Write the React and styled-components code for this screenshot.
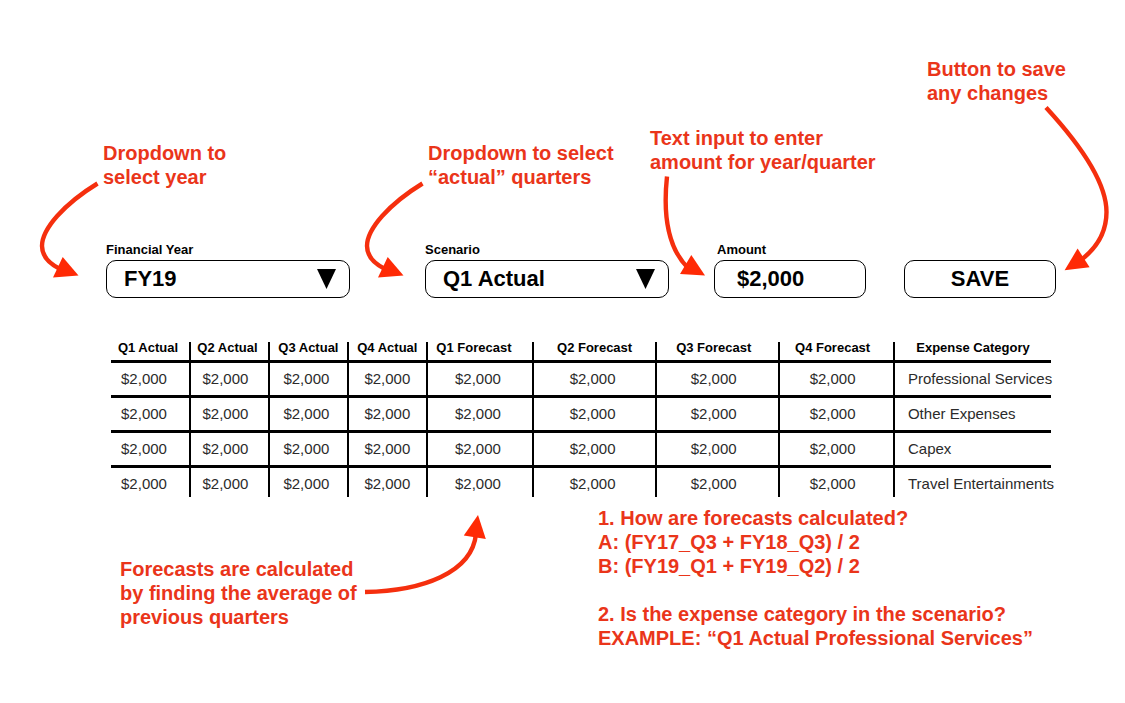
import React from 'react';
import styled, { createGlobalStyle, css } from 'styled-components';

const GlobalStyle = createGlobalStyle`
  * { box-sizing: border-box; }
  body {
    margin: 0;
    background: #fff;
    color: #000;
    font-family: "Liberation Sans", Arial, Helvetica, sans-serif;
  }
`;

const Page = styled.main`
  padding: 57px 69px 48px 106px;
`;

const Controls = styled.form`
  display: grid;
  grid-template-columns:
    minmax(0, 244fr) minmax(0, 75fr) minmax(0, 244fr) minmax(0, 45fr)
    minmax(0, 152fr) minmax(0, 38fr) minmax(0, 152fr);
  align-items: end;
`;

const Cell = styled.div`
  position: relative;
  display: flex;
  flex-direction: column;
  grid-column: ${(p) => p.$column};
`;

const Note = styled.p`
  margin: 0 0 ${(p) => p.$drop || 0}px ${(p) => p.$indent || 0}px;
  color: #ea351a;
  font-size: 20px;
  font-weight: 700;
  line-height: 24px;
  white-space: pre;
`;

const Label = styled.label`
  padding-left: ${(p) => p.$indent || 0}px;
  font-size: 13px;
  font-weight: 700;
  line-height: 16px;
  margin-bottom: 2px;
`;

const control = css`
  width: 100%;
  height: 38px;
  margin: 0;
  border: 1px solid #000;
  border-radius: 10px;
  background: #fff;
  color: #000;
  font-family: inherit;
  font-size: 22px;
  font-weight: 700;
  line-height: 24px;
`;

const SelectBox = styled.div`
  position: relative;
`;

const Select = styled.select`
  ${control}
  display: block;
  appearance: none;
  padding: 0 40px 0 17px;
`;

const Caret = styled.svg`
  position: absolute;
  right: 14px;
  top: 9px;
  pointer-events: none;
`;

const TextInput = styled.input`
  ${control}
  padding: 0 12px 0 22px;
`;

const SaveButton = styled.button`
  ${control}
  padding: 0;
  cursor: pointer;
`;

const ArrowSvg = styled.svg`
  position: absolute;
  left: ${(p) => p.$left}px;
  bottom: ${(p) => p.$bottom}px;
  pointer-events: none;
  overflow: visible;
`;

const Table = styled.table`
  width: calc(100% - 10px);
  margin: 44px 5px 0;
  border-collapse: collapse;
  table-layout: fixed;
`;

const Col = styled.col`
  width: ${(p) => p.$share}%;
`;

const Head = styled.th`
  height: 19px;
  padding: 0 ${(p) => p.$inset}px 7px 0;
  border-bottom: 3px solid #000;
  font-size: 13px;
  line-height: 11px;
  text-align: center;
  white-space: nowrap;

  & + & { border-left: 2px solid #000; }
`;

const Data = styled.td`
  height: 35px;
  padding: 8px ${(p) => p.$inset}px 0 0;
  color: #2b2b2b;
  font-size: 15px;
  line-height: 16px;
  text-align: center;
  vertical-align: top;
  white-space: nowrap;

  & + & { border-left: 2px solid #000; }
  tr + tr > & { border-top: 3px solid #000; }
  tr:last-child > & { height: 30px; }
  &:last-child { padding-left: 13px; text-align: left; }
`;

const Remarks = styled.section`
  display: grid;
  grid-template-columns: 492fr 458fr;
  align-items: start;
`;

const Remark = styled.div`
  position: relative;
  justify-self: start;
  margin: ${(p) => p.$top}px 0 0 ${(p) => p.$indent || 0}px;
`;

function Arrow({ left, bottom, box, path, head }) {
  const [, , w, h] = box;
  return (
    <ArrowSvg $left={left} $bottom={bottom} width={w} height={h} viewBox={box.join(' ')} aria-hidden="true">
      <path d={path} fill="none" stroke="#f52f0e" strokeWidth="4.4" />
      <polygon points={head} fill="#ff2a05" />
    </ArrowSvg>
  );
}

const selectArrow = {
  box: [36, 178, 64, 120],
  path: 'M97.5 183.5 C64 204 42 229 42 246 C42 256 48 263 60 269',
  head: '62.7,257 78.5,275.6 53,277.6',
};

const amountArrow = {
  box: [660, 174, 48, 124],
  path: 'M667 176.5 C663 214 667 247 688 268',
  head: '691.3,255 705,275.4 680,274',
};

const saveArrow = {
  box: [1040, 104, 72, 194],
  path: 'M1046 107.5 C1075 139 1106.5 180 1106.5 212 C1106.5 232 1098 247 1081 260',
  head: '1077.6,248.6 1064.6,270.2 1089.6,267.2',
};

const forecastArrow = {
  box: [360, 512, 128, 117],
  path: 'M365 592 C422 591 472 573 476 534',
  head: '478,515 485.8,539 463.8,535.6',
};

const columns = [
  { title: 'Q1 Actual', share: 8.4, head: 4, body: 12 },
  { title: 'Q2 Actual', share: 8.4, head: 4, body: 8 },
  { title: 'Q3 Actual', share: 8.4, head: 0, body: 4 },
  { title: 'Q4 Actual', share: 8.4, head: 0, body: 0 },
  { title: 'Q1 Forecast', share: 11.3, head: 12, body: 4 },
  { title: 'Q2 Forecast', share: 13.1, head: 0, body: 4 },
  { title: 'Q3 Forecast', share: 13.1, head: 8, body: 8 },
  { title: 'Q4 Forecast', share: 12.2, head: 8, body: 8 },
  { title: 'Expense Category', share: 16.7, head: 0, body: 0 },
];

const categories = ['Professional Services', 'Other Expenses', 'Capex', 'Travel Entertainments'];

function Dropdown({ id, options }) {
  return (
    <SelectBox>
      <Select id={id} defaultValue={options[0]}>
        {options.map((o) => <option key={o}>{o}</option>)}
      </Select>
      <Caret width="19" height="20" viewBox="0 0 19 20" aria-hidden="true">
        <path d="M0 0H19L9.5 20Z" fill="#000" />
      </Caret>
    </SelectBox>
  );
}

export default function App() {
  return (
    <>
      <GlobalStyle />
      <Page>
        <Controls onSubmit={(e) => e.preventDefault()}>
          <Cell $column={1}>
            <Note $drop={53} $indent={-3}>{'Dropdown to\nselect year'}</Note>
            <Label htmlFor="year">Financial Year</Label>
            <Dropdown id="year" options={['FY19', 'FY18', 'FY17']} />
            <Arrow left={-70} bottom={0} {...selectArrow} />
          </Cell>
          <Cell $column={3}>
            <Note $drop={53} $indent={3}>{'Dropdown to select\n“actual” quarters'}</Note>
            <Label htmlFor="scenario">Scenario</Label>
            <Dropdown id="scenario" options={['Q1 Actual', 'Q2 Actual', 'Q3 Actual', 'Q4 Actual']} />
            <Arrow left={-64} bottom={0} {...selectArrow} />
          </Cell>
          <Cell $column={5}>
            <Note $drop={68} $indent={-64}>{'Text input to enter\namount for year/quarter'}</Note>
            <Label htmlFor="amount" $indent={3}>Amount</Label>
            <TextInput id="amount" type="text" defaultValue="$2,000" />
            <Arrow left={-54} bottom={0} {...amountArrow} />
          </Cell>
          <Cell $column={7}>
            <Note $drop={155} $indent={23}>{'Button to save\nany changes'}</Note>
            <SaveButton type="submit">SAVE</SaveButton>
            <Arrow left={136} bottom={0} {...saveArrow} />
          </Cell>
        </Controls>

        <Table>
          <colgroup>
            {columns.map((c) => <Col key={c.title} $share={c.share} />)}
          </colgroup>
          <thead>
            <tr>
              {columns.map((c) => <Head key={c.title} scope="col" $inset={c.head}>{c.title}</Head>)}
            </tr>
          </thead>
          <tbody>
            {categories.map((name) => (
              <tr key={name}>
                {columns.slice(0, -1).map((c) => <Data key={c.title} $inset={c.body}>$2,000</Data>)}
                <Data $inset={0}>{name}</Data>
              </tr>
            ))}
          </tbody>
        </Table>

        <Remarks>
          <Remark $top={60} $indent={14}>
            <Note>{'Forecasts are calculated\nby finding the average of\nprevious quarters'}</Note>
            <Arrow left={240} bottom={0} {...forecastArrow} />
          </Remark>
          <Remark $top={9}>
            <Note $drop={24}>{'1. How are forecasts calculated?\nA: (FY17_Q3 + FY18_Q3) / 2\nB: (FY19_Q1 + FY19_Q2) / 2'}</Note>
            <Note>{'2. Is the expense category in the scenario?\nEXAMPLE: “Q1 Actual Professional Services”'}</Note>
          </Remark>
        </Remarks>
      </Page>
    </>
  );
}
